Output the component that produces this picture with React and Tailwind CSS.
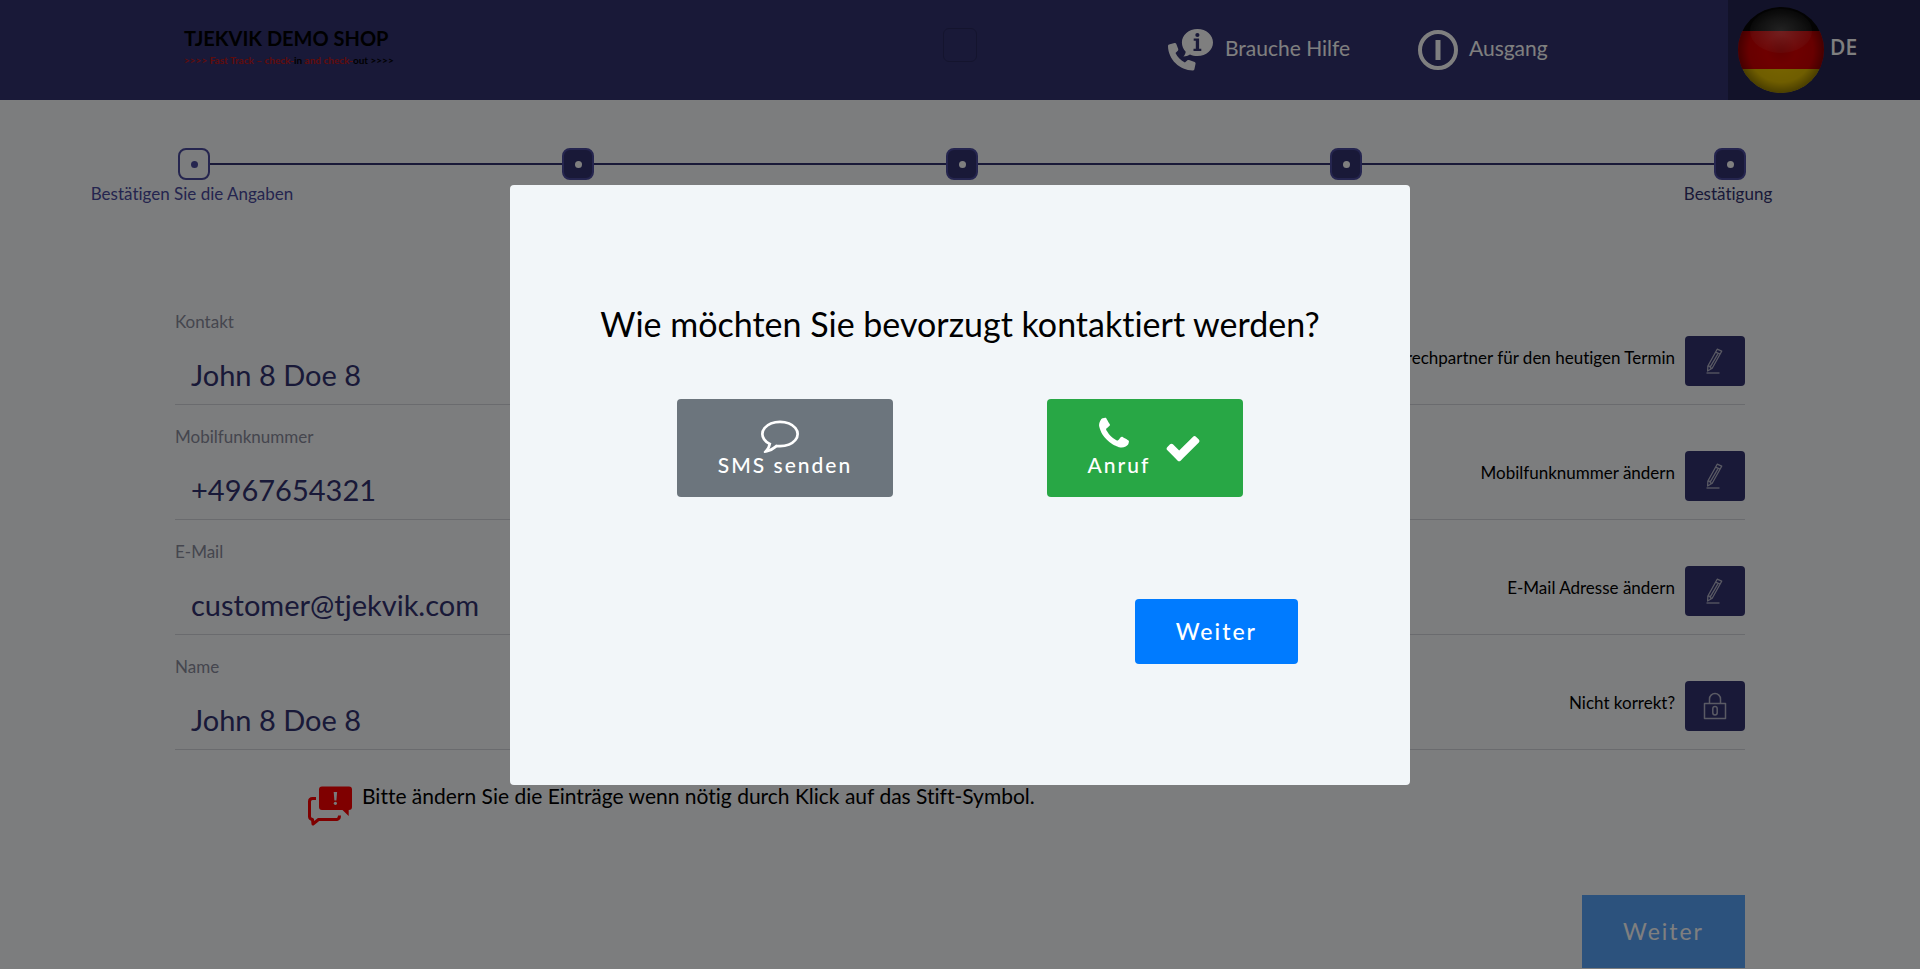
const steps = ['Bestätigen Sie die Angaben', '', '', '', 'Bestätigung'];

const rows = [
  { id: 'contact', label: 'Kontakt', value: 'John 8 Doe 8', action: 'Ansprechpartner für den heutigen Termin', icon: 'pen' },
  { id: 'mobile', label: 'Mobilfunknummer', value: '+4967654321', action: 'Mobilfunknummer ändern', icon: 'pen' },
  { id: 'email', label: 'E-Mail', value: 'customer@tjekvik.com', action: 'E-Mail Adresse ändern', icon: 'pen' },
  { id: 'name', label: 'Name', value: 'John 8 Doe 8', action: 'Nicht korrekt?', icon: 'lock' },
];

const PHONE =
  'M1600 1240q0 27-10 70.5t-21 68.5q-21 50-122 106-94 51-186 51-27 0-53-3.5t-57.5-12.5-47-14.5-55.5-20.5-49-18q-98-35-175-83-127-79-264-216t-216-264q-48-77-83-175-3-9-18-49t-20.5-55.5-14.5-47-12.5-57.5-3.5-53q0-92 51-186 56-101 106-122 25-11 68.5-21t70.5-10q14 0 21 3 18 6 53 76 11 19 30 54t35 63.5 31 53.5q3 4 17.5 25t21.5 35.5 7 28.5q0 20-28.5 50t-62 55-62 53-28.5 46q0 9 5 22.5t8.5 20.5 14 24 11.5 19q76 137 174 235t235 174q2 1 19 11.5t24 14 20.5 8.5 22.5 5q18 0 46-28.5t53-62 55-62 50-28.5q14 0 28.5 7t35.5 21.5 25 17.5q25 15 53.5 31t63.5 35 54 30q70 35 76 53 3 7 3 21z';
const COMMENT =
  'M896 384q-204 0-381.5 69.5t-282 187.5-104.5 255q0 112 71.5 213.5t201.5 175.5l87 50-27 96q-24 91-70 172 152-63 275-171l43-38 57 6q69 8 130 8 204 0 381.5-69.5t282-187.5 104.5-255-104.5-255-282-187.5-381.5-69.5zm896 512q0 174-120 321.5t-326 233-450 85.5q-70 0-145-8-198 175-460 242-49 14-114 22h-5q-15 0-27-10.5t-16-27.5v-1q-3-4-.5-12t2-10 4.5-9.5l6-9 7-8.5 8-9q7-8 31-34.5t34.5-38 31-39.5 32.5-51 27-59 26-76q-157-89-247.5-220t-90.5-281q0-174 120-321.5t326-233 450-85.5 450 85.5 326 233 120 321.5z';
const CHECK =
  'M1671 566q0 40-28 68l-724 724-136 136q-28 28-68 28t-68-28l-136-136-362-362q-28-28-28-68t28-68l136-136q28-28 68-28t68 28l294 295 656-657q28-28 68-28t68 28l136 136q28 28 28 68z';

function Glyph({ d, className }) {
  return (
    <svg viewBox="0 0 1792 1792" fill="currentColor" aria-hidden="true" className={className}>
      <path d={d} />
    </svg>
  );
}

function HelpIcon() {
  return (
    <svg viewBox="0 0 46 42" className="h-[42px] w-[46px] shrink-0" fill="#fff" aria-hidden="true">
      <path d="M29.500 0C38.300 0 45 5.900 45 13.500S38.300 27 29.500 27c-2.800 0-5.300-.5-7.500-1.500-1.700 1.200-4.300 2-6.600 2 1.300-1.500 2.200-3.200 2.300-4.800-2.400-2.400-3.800-5.600-3.800-9.200C13.900 5.900 20.700 0 29.500 0z" />
      <path d="M1 15.500 6.500 14c.8-.2 1.400.1 1.700.8l2 5.200c.2.700.1 1.200-.4 1.700l-2.300 2.200c2 4 5.300 7.400 9.400 9.600l2.300-2.100c.5-.5 1.200-.6 1.800-.3l5.700 1.900c.7.300 1 .9.9 1.600l-1.200 5.600c-.2.800-.7 1.200-1.500 1.200C12.200 41.500.2 30.800 0 17c0-.8.300-1.300 1-1.500z" />
      <circle cx="29.400" cy="6" r="2.100" fill="#323271" />
      <path d="M25.700 9.500h5.400v10.300h2.200V22h-7.800v-2.200h2.300v-8h-2.100z" fill="#323271" />
    </svg>
  );
}

function ExitIcon() {
  return (
    <svg viewBox="0 0 40 40" className="size-10 shrink-0" fill="none" stroke="#fff" aria-hidden="true">
      <circle cx="20" cy="20" r="18" strokeWidth="4" />
      <path d="M20 10v20" strokeWidth="5" />
    </svg>
  );
}

function GermanFlag() {
  return (
    <svg viewBox="0 0 86 86" className="size-[86px] shrink-0" aria-hidden="true">
      <defs>
        <clipPath id="disc"><circle cx="43" cy="43" r="43" /></clipPath>
        <radialGradient id="shade" cx="50%" cy="50%" r="50%">
          <stop offset="0" stopColor="#000" stopOpacity=".14" />
          <stop offset=".35" stopColor="#000" stopOpacity=".04" />
          <stop offset=".75" stopColor="#000" stopOpacity=".1" />
          <stop offset="1" stopColor="#000" stopOpacity=".4" />
        </radialGradient>
        <radialGradient id="gloss" cx="50%" cy="50%" r="55%">
          <stop offset="0" stopColor="#fff" stopOpacity=".26" />
          <stop offset="1" stopColor="#fff" stopOpacity=".04" />
        </radialGradient>
      </defs>
      <g clipPath="url(#disc)">
        <path fill="#0a0a0a" d="M0 0h86v24H0z" />
        <path fill="#e60000" d="M0 24h86v38H0z" />
        <path fill="#f8d000" d="M0 62h86v24H0z" />
        <ellipse cx="43" cy="24" rx="31" ry="22" fill="url(#gloss)" />
        <circle cx="43" cy="43" r="43" fill="url(#shade)" />
      </g>
    </svg>
  );
}

function PenIcon() {
  return (
    <svg viewBox="0 0 26 26" className="size-[26px]" fill="none" stroke="#b4b4c8" strokeWidth="1.300" strokeLinejoin="round" aria-hidden="true">
      <path d="M15.200 1.200 19.700 3.200 10.200 20.200 5.600 23 5.900 18z" />
      <path d="m13.600 4.200 4.400 2M5.900 18l2.100.4.400 1.600 1.800.2M15.800 6.200 8.400 18.600" />
      <path d="M4.500 25h13" />
    </svg>
  );
}

function LockIcon() {
  return (
    <svg viewBox="0 0 26 28" className="h-7 w-[26px]" fill="none" stroke="#b4b4c8" strokeWidth="1.500" strokeLinejoin="round" aria-hidden="true">
      <path d="M2.500 11.500h21v15h-21zM7.500 11.500V7a5.500 5.500 0 0 1 11 0v4.500" />
      <rect x="10.800" y="14.500" width="4.400" height="8.500" rx="2.200" />
    </svg>
  );
}

function AlertIcon() {
  return (
    <svg viewBox="0 0 44 40" className="block h-10 w-11 shrink-0" aria-hidden="true">
      <path d="M8 12.500H4.500Q1.500 12.500 1.500 15.500V30.500Q1.500 33 4.500 33.500L5 38l5.500-4.500H29Q31.500 33 31.500 29.500" fill="none" stroke="#f00" strokeWidth="3" strokeLinejoin="round" />
      <path d="M14 .5h27q3 0 3 3V21q0 3-3 3h-.3v6L34.500 24H14q-3 0-3-3V3.500q0-3 3-3z" fill="#f00" />
      <path d="M25.700 6h3.400l-.7 8.500h-2z" fill="#f2f6f9" />
      <circle cx="27.400" cy="17.300" r="1.600" fill="#f2f6f9" />
    </svg>
  );
}

function Header() {
  return (
    <header className="flex h-[100px] items-center bg-[#323271] text-[21px] text-white">
      <a href="#start" className="ml-[184px] block w-[208px] pb-1 leading-none whitespace-nowrap text-black">
        <span className="block text-[20px] leading-6 font-bold">TJEKVIK DEMO SHOP</span>
        <span className="block text-[10px] leading-5 font-bold text-[#c01818]">
          &gt;&gt;&gt;&gt; Fast Track – check-<span className="text-black">in</span> and check-<span className="text-black">out &gt;&gt;&gt;&gt;</span>
        </span>
      </a>
      <div className="flex flex-1 justify-end pr-[191px]">
        <div className="mb-2.5 size-[34px] rounded-md border border-[#28285c]" />
      </div>
      <nav className="flex items-center" aria-label="Hilfe und Ausgang">
        <a href="#hilfe" className="flex w-[250px] items-center gap-[11px]">
          <HelpIcon />
          <span className="pb-1">Brauche Hilfe</span>
        </a>
        <a href="#ausgang" className="flex w-[310px] items-center gap-[11px]">
          <ExitIcon />
          <span className="pb-1">Ausgang</span>
        </a>
      </nav>
      <button type="button" className="flex h-full w-[192px] items-center gap-1.5 bg-[#242453] pl-2.5 font-['Open_Sans',sans-serif] text-[21px] font-semibold">
        <GermanFlag />
        <span className="pb-1">DE</span>
      </button>
    </header>
  );
}

function Stepper() {
  return (
    <ol className="grid grid-cols-5 pt-12">
      {steps.map((step, i) => (
        <li key={i} className="flex flex-col items-center text-[17px]">
          <div className="-mr-0.5 ml-0.5 flex items-center self-stretch">
            <span className={i === 0 ? 'h-0.5 flex-1' : 'h-0.5 flex-1 bg-[#323271]'} />
            <span
              className={
                i === 0
                  ? 'flex size-8 items-center justify-center rounded-lg border-2 border-[#4a4a9e] bg-[#f8fafc]'
                  : 'flex size-8 items-center justify-center rounded-lg border-2 border-[#4a4a9e] bg-[#323271]'
              }
            >
              <span className={i === 0 ? 'size-[7px] rounded-full bg-[#4a4a9e]' : 'size-[7px] rounded-full bg-white'} />
            </span>
            <span className={i === steps.length - 1 ? 'h-0.5 flex-1' : 'h-0.5 flex-1 bg-[#323271]'} />
          </div>
          <span className={i === 0 ? 'h-7 leading-7 text-[#4a4a9e]' : 'h-7 leading-7 text-[#323271]'}>{step}</span>
        </li>
      ))}
    </ol>
  );
}

function DetailRow({ row }) {
  return (
    <div className="flex h-[115px] items-start border-b border-[#d4d6dc]">
      <div className="flex-1 pt-5">
        <label htmlFor={row.id} className="block text-[17px] leading-6 text-[#8a8c9c]">{row.label}</label>
        <input id={row.id} readOnly defaultValue={row.value} className="mt-4 block h-12 w-full bg-transparent pl-4 text-[29px] text-[#323271] outline-none" />
      </div>
      <div className="flex items-center gap-2.5 pt-[46px]">
        <span id={row.id + '-action'} className="pb-1.5 text-[17px] text-black">{row.action}</span>
        <button type="button" aria-labelledby={row.id + '-action'} className="flex h-[50px] w-[60px] items-center justify-center rounded-sm bg-[#323271]">
          {row.icon === 'pen' ? <PenIcon /> : <LockIcon />}
        </button>
      </div>
    </div>
  );
}

function ContactDialog() {
  return (
    <div className="fixed inset-0 flex items-center justify-center bg-black/50">
      <section role="dialog" aria-modal="true" aria-labelledby="dialog-title" className="w-[900px] rounded bg-[#f2f6f9] px-[90px] pt-[115px] pb-[121px]">
        <h2 id="dialog-title" className="text-center text-[34px] leading-12 whitespace-nowrap text-black">
          Wie möchten Sie bevorzugt kontaktiert werden?
        </h2>
        <div className="-mr-[5px] ml-[5px] mt-[51px] grid grid-cols-2 justify-items-center text-[21px] font-medium tracking-[2px] text-white">
          <button type="button" className="flex h-[98px] flex-col items-center justify-center rounded bg-[#6c757d] px-[41px] pb-1">
            <span className="block pr-2.5"><Glyph d={COMMENT} className="size-[38px]" /></span>
            <span className="leading-6">SMS senden</span>
          </button>
          <button type="button" aria-pressed="true" className="flex h-[98px] items-center justify-center gap-3.5 rounded bg-[#28a745] px-[41px]">
            <span className="flex flex-col items-center pb-1">
              <span className="block pr-2.5"><Glyph d={PHONE} className="size-[38px]" /></span>
              <span className="leading-6">Anruf</span>
            </span>
            <Glyph d={CHECK} className="size-[38px]" />
          </button>
        </div>
        <div className="mt-[102px] flex justify-end pr-[22px]">
          <button type="button" className="h-[65px] rounded bg-[#007bff] px-[41px] text-[23px] font-medium tracking-[2px] text-white">Weiter</button>
        </div>
      </section>
    </div>
  );
}

export default function App() {
  return (
    <div className="min-h-screen overflow-hidden bg-[#f8fafc] font-[Lato,sans-serif] [font-variant-ligatures:none]">
      <Header />
      <main>
        <Stepper />
        <form className="px-[175px] pt-[82px]">
          {rows.map((row) => (
            <DetailRow key={row.id} row={row} />
          ))}
          <p className="mt-6 flex items-start gap-2.5 px-[133px] text-[21px] text-black">
            <span className="pt-3"><AlertIcon /></span>
            <span className="pt-1.5 leading-8">Bitte ändern Sie die Einträge wenn nötig durch Klick auf das Stift-Symbol.</span>
          </p>
          <div className="mt-[69px] flex justify-end">
            <button type="button" className="h-[73px] bg-[#58a4fb] px-[41px] text-[23px] tracking-[2px] text-white">Weiter</button>
          </div>
        </form>
      </main>
      <ContactDialog />
    </div>
  );
}
